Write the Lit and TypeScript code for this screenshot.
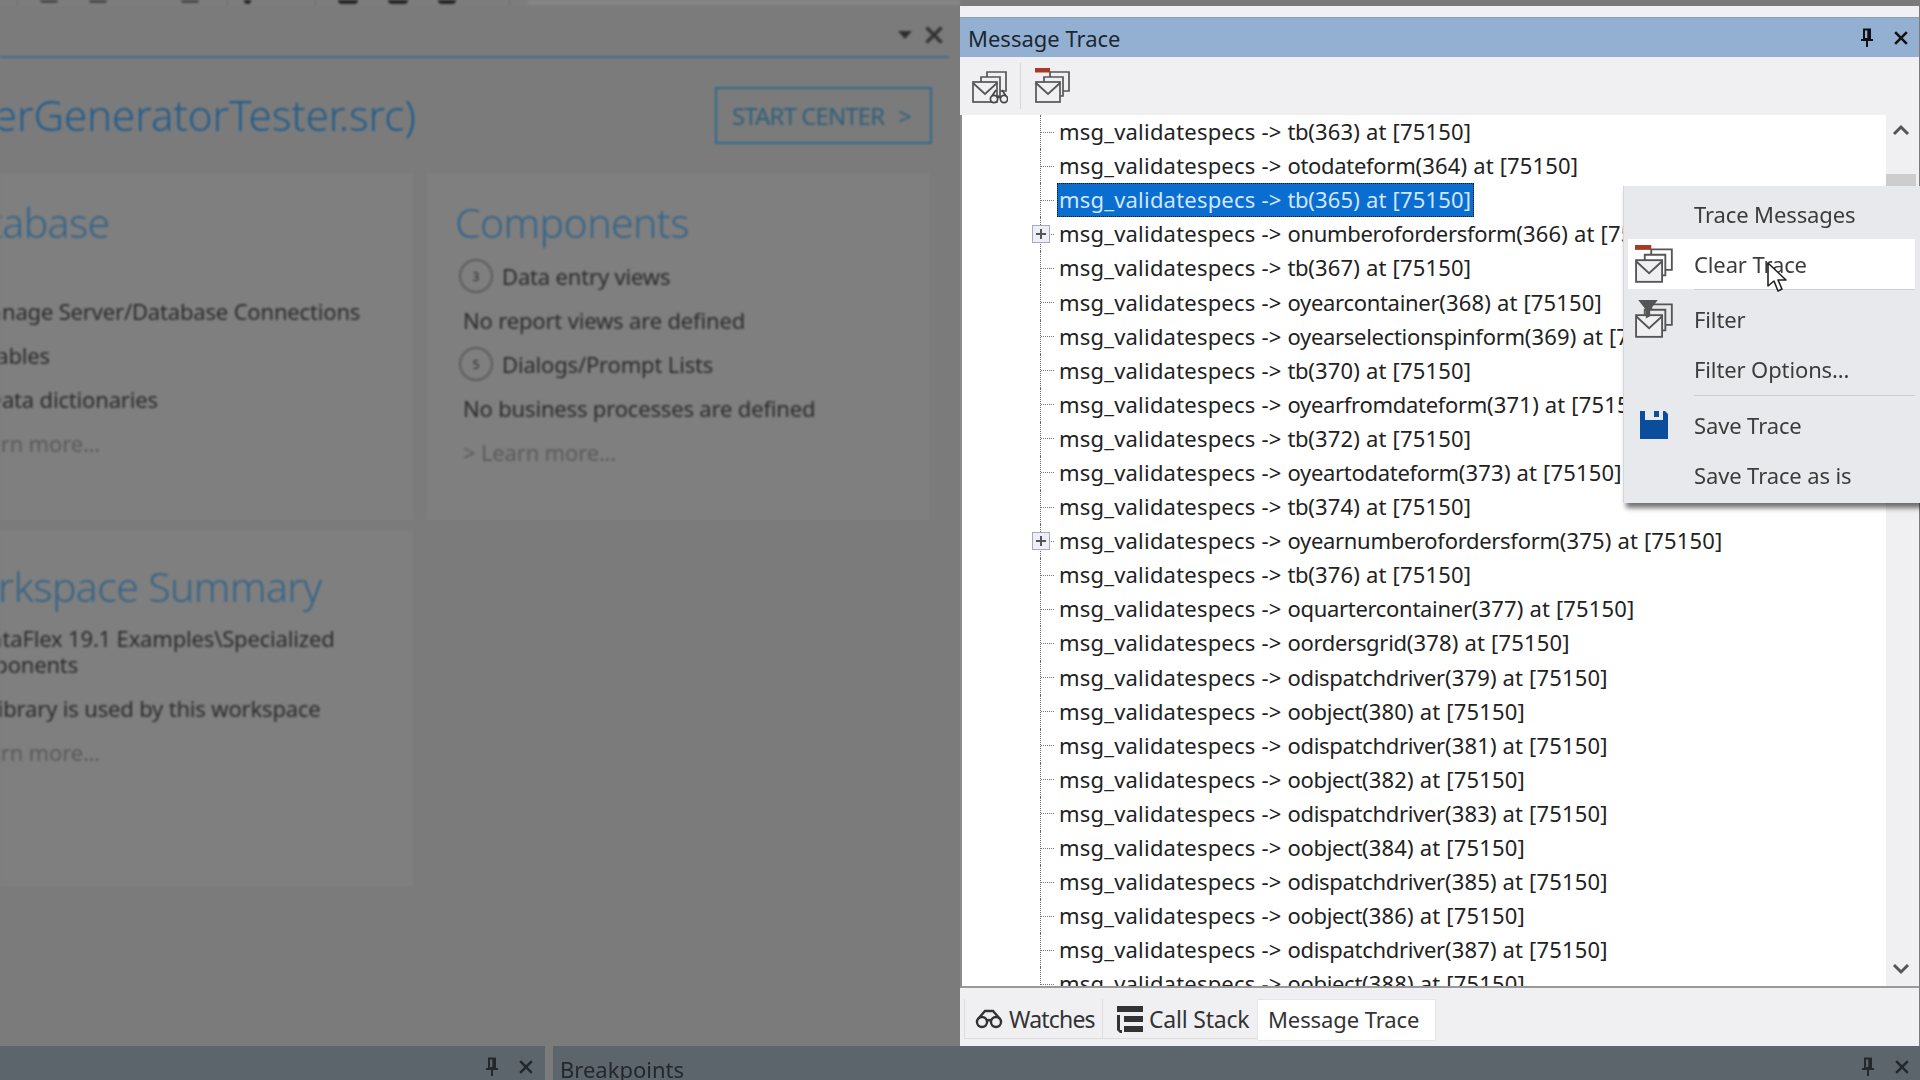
import { LitElement, html, css, svg } from "lit";
import { customElement } from "lit/decorators.js";

const mail = (kind: "glasses" | "clear" | "filter") => {
  const stroke = "#555";
  return html`<svg class="ico" viewBox="0 0 36 36" fill="none" stroke=${stroke} stroke-width="1.7">
    <path d="M9 14 V9 H28 V28 H25" />
    <path d="M15 9 V4 H34 V23 H28" />
    <rect x="1" y="14" width="24" height="20" fill="#f0f0f2" />
    <path d="M1 15 L13 26 L25 15" />
    ${kind === "glasses"
      ? svg`<g stroke="#444" stroke-width="1.7"><circle cx="22" cy="31" r="3.6" fill="#f0f0f2"/><circle cx="32" cy="31" r="3.6" fill="#f0f0f2"/><path d="M25 30 Q27 28 29 30 M20 28 L24 22 M34 28 L30 22"/></g>`
      : kind === "clear"
      ? svg`<rect x="0" y="0" width="15" height="4.5" fill="#a83a24" stroke="none"/>`
      : svg`<path d="M3 0 H21 L14 9 V15 L10 17 V9 Z" fill="#555" stroke="none"/>`}
  </svg>`;
};

const pin = html`<svg class="pin" viewBox="0 0 14 20" fill="none" stroke="currentColor" stroke-width="2">
  <path d="M4 1.5 H10 V11 H4 Z" /><path d="M1 12 H13" /><path d="M7 12 V19" /><path d="M8.5 2 V11" stroke-width="2.4"/>
</svg>`;
const cross = html`<svg class="cross" viewBox="0 0 12 12" fill="none" stroke="currentColor" stroke-width="2.2">
  <path d="M1 1 L11 11 M11 1 L1 11" />
</svg>`;

const names: Array<[string, number]> = [
  ["tb", 363], ["otodateform", 364], ["tb", 365], ["onumberofordersform", 366], ["tb", 367],
  ["oyearcontainer", 368], ["oyearselectionspinform", 369], ["tb", 370], ["oyearfromdateform", 371],
  ["tb", 372], ["oyeartodateform", 373], ["tb", 374], ["oyearnumberofordersform", 375], ["tb", 376],
  ["oquartercontainer", 377], ["oordersgrid", 378], ["odispatchdriver", 379], ["oobject", 380],
  ["odispatchdriver", 381], ["oobject", 382], ["odispatchdriver", 383], ["oobject", 384],
  ["odispatchdriver", 385], ["oobject", 386], ["odispatchdriver", 387], ["oobject", 388],
];

/* top toolbar remnants: [kind, width, left gap] */
const strip: Array<[string, number, number]> = [
  ["sep", 1, 17], ["soft", 18, 22], ["soft", 18, 31], ["soft", 18, 74], ["sep", 1, 28], ["dark", 7, 16],
  ["sep", 1, 64], ["dark", 20, 22], ["dark", 20, 30], ["dark", 18, 30], ["sep", 1, 53], ["box", 460, 18],
];

@customElement("app-root")
export class AppRoot extends LitElement {
  static styles = css`
    :host { display: block; width: 1920px; height: 1080px; overflow: hidden; font-family: "Noto Sans", "Open Sans", sans-serif; background: #7b7b7b; }
    * { box-sizing: border-box; }
    .main { display: flex; height: 1046px; }

    /* dimmed left pane */
    .left { width: 960px; flex: none; display: flex; flex-direction: column; overflow: hidden; background: #7b7b7b; filter: blur(0.8px); color: #2c2c2c; }
    .topstrip { height: 6px; flex: none; display: flex; overflow: hidden; background: #7d7d7d; }
    .strip-soft { flex: none; height: 3px; background: #4a4a4a; border-radius: 0 0 8px 8px; }
    .strip-dark { flex: none; height: 4px; background: #262626; border-radius: 0 0 8px 8px; }
    .strip-sep { flex: none; height: 5px; background: #6c6c6c; }
    .strip-box { flex: none; height: 5px; background: #858585; }
    .docktitle { height: 52px; flex: none; width: 949px; border-bottom: 2px solid #3d6d90; display: flex; align-items: center; justify-content: flex-end; gap: 13px; padding: 8px 6px 0 0; }
    .arrow { width: 0; height: 0; border-left: 7px solid transparent; border-right: 7px solid transparent; border-top: 8px solid #2e2e2e; }
    .dockx { width: 18px; height: 18px; color: #333; }
    .dockx .cross { width: 18px; height: 18px; display: block; }
    .head { width: 949px; display: flex; align-items: center; justify-content: space-between; padding: 27px 17px 0 0; height: 86px; }
    .title { font-size: 42px; font-weight: 300; color: #1f5c8c; width: 416px; white-space: nowrap; overflow: hidden; display: flex; justify-content: flex-end; }
    .startbtn { width: 217px; height: 57px; margin-top: 1px; border: 2px solid #2f6a8c; display: flex; align-items: center; justify-content: center; gap: 14px; padding-right: 4px; font-size: 24px; color: #2f5f7a; letter-spacing: -.9px; }
    .grid { display: grid; grid-template-columns: 502px 502px; column-gap: 14px; margin-left: -89px; margin-top: 29px; align-items: start; }
    .card { background: #7f7f7f; padding: 25px 0 0 28px; }
    .card.a { height: 347px; }
    .card.c { height: 355px; margin-top: 11px; grid-column: 1; padding-top: 31px; }
    .h2 { font-size: 41px; font-weight: 300; color: #356488; line-height: 48px; height: 48px; letter-spacing: -.6px; white-space: nowrap; }
    .line { font-size: 22px; line-height: 44px; height: 44px; margin-left: 8px; white-space: nowrap; color: #2b2b2b; letter-spacing: -.17px; }
    .line.more { color: #5a5a5a; }
    .comp { display: flex; align-items: center; gap: 9px; height: 44px; margin: 8px 0 0 4px; font-size: 22px; color: #2b2b2b; letter-spacing: -.17px; white-space: nowrap; }
    .comp.next { margin-top: 0; }
    .plain { height: 44px; margin: 43px 0 0 31px; font-size: 22px; line-height: 44px; color: #2b2b2b; letter-spacing: -.17px; white-space: nowrap; }
    .circle { width: 34px; height: 34px; border: 2px solid #5d5d5d; border-radius: 50%; flex: none; display: flex; align-items: center; justify-content: center; font-size: 12px; letter-spacing: 0; }
    .wrap { font-size: 22px; line-height: 26px; margin: 15px 0 0 8px; width: 440px; color: #2b2b2b; letter-spacing: -.17px; }
    .gapline { margin-top: 9px; margin-left: 18px; }

    /* right panel */
    .panel { flex: 1; margin-top: 6px; margin-right: 1px; display: flex; flex-direction: column; position: relative; background: #f0f0f3; filter: blur(0.35px); }
    .ptitle-gap { height: 11px; flex: none; background: #f1f1f4; }
    .ptitle { height: 40px; flex: none; background: #93b0d2; display: flex; align-items: center; padding: 0 7px 0 8px; font-size: 22px; color: #1b2733; border-top: 1px solid #8a9fb8; }
    .ptitle .t { flex: 1; }
    .pin { width: 14px; height: 20px; display: block; }
    .cross { width: 14px; height: 14px; display: block; }
    .tools { display: flex; align-items: center; gap: 20px; align-self: stretch; }
    .ptitle .tools { gap: 20px; color: #111; padding-right: 4px; }
    .toolbar { height: 58px; flex: none; display: flex; align-items: center; padding: 0 0 0 12px; }
    .ico { width: 36px; height: 36px; display: block; flex: none; }
    .tsep { width: 1px; height: 46px; background: #d5d5d8; margin: 0 14px 0 12px; }
    .body { flex: 1; min-height: 0; display: flex; border-left: 2px solid #8c8c8c; border-bottom: 2px solid #9a9a9a; background: #fff; }
    .tree { flex: 1; overflow: hidden; padding-left: 78px; font-size: 22px; color: #222; min-width: 0; }
    .row { height: 34.1px; display: flex; align-items: stretch; white-space: nowrap; }
    .gutter { width: 19px; flex: none; border-left: 1px dotted #666; display: flex; align-items: center; position: relative; }
    .stub { width: 13px; border-top: 1px dotted #777; }
    .plus { position: absolute; left: -9px; top: 8px; width: 18px; height: 18px; border: 1px solid #a9a9bd; background: #eeeef6; }
    .plus::before { content: ""; position: absolute; left: 3px; right: 3px; top: 7px; height: 2px; background: #555; }
    .plus::after { content: ""; position: absolute; top: 3px; bottom: 3px; left: 7px; width: 2px; background: #555; }
    .txt { display: flex; align-items: center; padding: 0 0 2px 0; white-space: pre; }
    .pre { letter-spacing: .2px; }
    .nm { letter-spacing: -.3px; }
    .suf { letter-spacing: .17px; }
    .row.sel .txt { background: #0a6dd0; color: #cfe6ff; outline: 1px dotted #111; outline-offset: -1px; padding: 0 3px 2px 2px; margin-left: -2px; }
    .scroll { width: 33px; flex: none; background: #f0f0f2; display: flex; flex-direction: column; align-items: center; padding: 9px 3px 11px 0; }
    .thumb { width: 30px; height: 300px; margin-top: 38px; background: #cdcdcd; flex: none; }
    .spacer { flex: 1; }
    .chev { width: 18px; height: 12px; display: block; flex: none; }
    .tabs { height: 58px; flex: none; display: flex; align-items: flex-start; padding: 11px 0 0 4px; font-size: 23px; color: #333; }
    .tab { height: 40px; display: flex; align-items: center; border-bottom: 1px solid #ddd; gap: 6px; }
    .tab.w { width: 139px; padding-left: 10px; border-left: 1px solid #ddd; border-right: 1px solid #ddd; letter-spacing: -.8px; }
    .tab.s { width: 154px; padding-left: 12px; letter-spacing: -.2px; }
    .tab.m { width: 179px; height: 42px; padding: 0 0 3px 10px; background: #fff; border: 1px solid #e4e4e4; font-size: 22px; letter-spacing: -.1px; }
    .tabico { display: block; flex: none; }

    /* context menu */
    .menu { position: absolute; top: 180px; right: -1px; width: 297px; height: 317px; background: #e8e9ec; border-left: 1px solid #d6d6d8; box-shadow: 3px 5px 5px rgba(0,0,0,.55); padding: 3px 5px 0 4px; font-size: 22px; color: #3c3c3c; letter-spacing: -.12px; }
    .item { height: 50px; display: flex; align-items: center; }
    .icell { width: 66px; flex: none; display: flex; justify-content: center; padding-right: 14px; }
    .item.hot { background: #fff; }
    .msep { height: 1px; background: #cfcfd3; margin-left: 66px; }
    .msep.one { margin: 0 0 4px 66px; }
    .msep.two { margin: 1px 0 4px 66px; }
    .item .ico { width: 39px; height: 39px; }
    .save { display: block; margin-right: 1px; }
    .cursor { position: absolute; left: 143px; top: 76px; width: 22px; height: 32px; }

    .bottom { height: 34px; flex: none; display: flex; background: #7b7b7b; overflow: hidden; font-size: 22px; color: #23282c; filter: blur(.7px); }
    .dock { background: #5c646c; height: 34px; display: flex; align-items: center; justify-content: flex-end; gap: 20px; padding: 8px 12px 0 0; }
    .dock.l { width: 545px; flex: none; }
    .dock.r { flex: 1; margin-left: 8px; justify-content: space-between; padding: 8px 11px 0 7px; }
    .dock.r .t { line-height: 34px; height: 34px; margin-top: 4px; }
  `;

  render() {
    return html`
      <div class="main">
        <div class="left">
          <div class="topstrip">
            ${strip.map(([k, w, g]) => html`<i class="strip-${k}" style="width:${w}px;margin-left:${g}px"></i>`)}
          </div>
          <div class="docktitle">
            <span class="arrow"></span>
            <span class="dockx">${cross}</span>
          </div>
          <div class="head">
            <div class="title"><span>erGeneratorTester.src)</span></div>
            <div class="startbtn"><span>START CENTER</span><span>&gt;</span></div>
          </div>
          <div class="grid">
            <div class="card a">
              <div class="h2">Database</div>
              <div class="plain">Manage Server/Database Connections</div>
              <div class="comp next"><span class="circle">2</span>Tables</div>
              <div class="comp next"><span class="circle">1</span>Data dictionaries</div>
              <div class="line more">&gt; Learn more...</div>
            </div>
            <div class="card a">
              <div class="h2">Components</div>
              <div class="comp"><span class="circle">3</span>Data entry views</div>
              <div class="line">No report views are defined</div>
              <div class="comp next"><span class="circle">5</span>Dialogs/Prompt Lists</div>
              <div class="line">No business processes are defined</div>
              <div class="line more">&gt; Learn more...</div>
            </div>
            <div class="card c">
              <div class="h2">Workspace Summary</div>
              <div class="wrap">C:\\DataFlex 19.1 Examples\\Specialized Components</div>
              <div class="line gapline">No library is used by this workspace</div>
              <div class="line more">&gt; Learn more...</div>
            </div>
          </div>
        </div>

        <div class="panel">
          <div class="ptitle-gap"></div>
          <div class="ptitle">
            <span class="t">Message Trace</span>
            <span class="tools">${pin}${cross}</span>
          </div>
          <div class="toolbar">
            ${mail("glasses")}
            <span class="tsep"></span>
            ${mail("clear")}
          </div>
          <div class="body">
            <div class="tree">
              ${names.map(
                ([n, id]) => html`
                  <div class="row ${id === 365 ? "sel" : ""}">
                    <span class="gutter">
                      <span class="stub"></span>
                      ${id === 366 || id === 375 ? html`<span class="plus"></span>` : ""}
                    </span>
                    <span class="txt"><span class="pre">msg_validatespecs -&gt; </span><span class="nm">${n}</span><span class="suf">(${id}) at [75150]</span></span>
                  </div>
                `
              )}
            </div>
            <div class="scroll">
              <svg class="chev" viewBox="0 0 18 12" fill="none" stroke="#555" stroke-width="3"><path d="M2 10 L9 3 L16 10" /></svg>
              <div class="thumb"></div>
              <div class="spacer"></div>
              <svg class="chev" viewBox="0 0 18 12" fill="none" stroke="#555" stroke-width="3"><path d="M2 2 L9 9 L16 2" /></svg>
            </div>
          </div>
          <div class="tabs">
            <div class="tab w">
              <svg class="tabico" width="28" height="20" viewBox="0 0 28 20" fill="none" stroke="#333" stroke-width="2.4"><circle cx="7" cy="13" r="5"/><circle cx="21" cy="13" r="5"/><path d="M12 12 Q14 10 16 12 M3 10 L10 2 H18 L25 10"/></svg>
              <span>Watches</span>
            </div>
            <div class="tab s">
              <svg class="tabico" width="28" height="28" viewBox="0 0 28 28" fill="#333"><rect x="2" y="1" width="26" height="6"/><rect x="9" y="11" width="19" height="6"/><rect x="9" y="21" width="19" height="6"/><path d="M5 10 H2 V25 L5 28 H7 V25 H5 Z"/></svg>
              <span>Call Stack</span>
            </div>
            <div class="tab m"><span>Message Trace</span></div>
          </div>

          <div class="menu">
            <div class="item"><span class="icell"></span>Trace Messages</div>
            <div class="item hot"><span class="icell">${mail("clear")}</span>Clear Trace</div>
            <div class="msep one"></div>
            <div class="item"><span class="icell">${mail("filter")}</span>Filter</div>
            <div class="item"><span class="icell"></span>Filter Options...</div>
            <div class="msep two"></div>
            <div class="item"><span class="icell">
              <svg class="save" width="28" height="28" viewBox="0 0 28 28"><path d="M0 0 H5 V9 H23 V0 H25 L28 3 V28 H0 Z" fill="#0a4d9c"/><rect x="14" y="0" width="5" height="6" fill="#0a4d9c"/></svg>
            </span>Save Trace</div>
            <div class="item"><span class="icell"></span>Save Trace as is</div>
            <svg class="cursor" viewBox="0 0 22 32"><path d="M1 1 V24 L7 19 L11 29 L15 27 L11 18 L19 18 Z" fill="#fff" stroke="#222" stroke-width="1.6" stroke-linejoin="round"/></svg>
          </div>
        </div>
      </div>
      <div class="bottom">
        <div class="dock l">${pin}${cross}</div>
        <div class="dock r"><span class="t">Breakpoints</span><span class="tools" style="align-items:center">${pin}${cross}</span></div>
      </div>
    `;
  }
}
